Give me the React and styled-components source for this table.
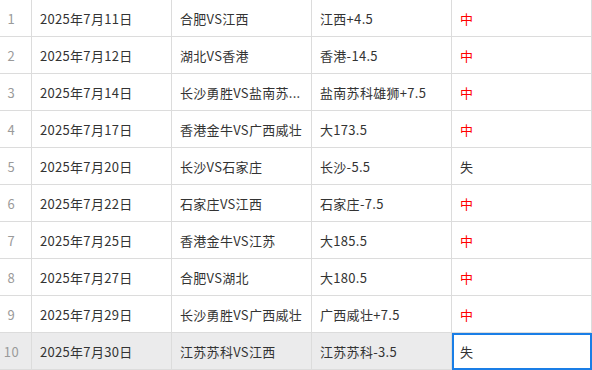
import styled, { createGlobalStyle } from "styled-components";

const GlobalStyle = createGlobalStyle`
  html, body {
    margin: 0;
    padding: 0;
    background: #ffffff;
  }
  body {
    font-family: "Microsoft YaHei", "Noto Sans CJK SC", "Noto Sans", sans-serif;
    overflow: hidden;
  }
`;

const Sheet = styled.div`
  width: 592px;
  height: 370px;
  overflow: hidden;
  background: #ffffff;
`;

const Row = styled.div`
  display: grid;
  grid-template-columns: 32px repeat(4, 140px);
  background: ${(p) => (p.$active ? "#ebebec" : "#ffffff")};
`;

const Cell = styled.div`
  height: 36px;
  padding: 0 8px;
  display: flex;
  align-items: center;
  border-right: 1px solid #dcdcdc;
  border-bottom: 1px solid #dcdcdc;
  font-size: 13px;
  letter-spacing: 0.3px;
  color: ${(p) => (p.$hit ? "#ff0000" : "#333333")};
  white-space: nowrap;
  overflow: hidden;
  min-width: 0;
  box-sizing: content-box;

  span {
    overflow: hidden;
    text-overflow: ellipsis;
  }
`;

const IndexCell = styled(Cell)`
  width: 23px;
  padding: 0 8px 0 0;
  justify-content: center;
  color: #9a9a9a;
  letter-spacing: 0.6px;
`;

const DataCell = styled(Cell)`
  width: 123px;
`;

const SelectedCell = styled(DataCell)`
  background: #ffffff;
  outline: 2px solid #1a7ee6;
  outline-offset: -2px;
  position: relative;
  z-index: 1;
`;

const rows = [
  ["2025年7月11日", "合肥VS江西", "江西+4.5", "中"],
  ["2025年7月12日", "湖北VS香港", "香港-14.5", "中"],
  ["2025年7月14日", "长沙勇胜VS盐南苏...", "盐南苏科雄狮+7.5", "中"],
  ["2025年7月17日", "香港金牛VS广西威壮", "大173.5", "中"],
  ["2025年7月20日", "长沙VS石家庄", "长沙-5.5", "失"],
  ["2025年7月22日", "石家庄VS江西", "石家庄-7.5", "中"],
  ["2025年7月25日", "香港金牛VS江苏", "大185.5", "中"],
  ["2025年7月27日", "合肥VS湖北", "大180.5", "中"],
  ["2025年7月29日", "长沙勇胜VS广西威壮", "广西威壮+7.5", "中"],
  ["2025年7月30日", "江苏苏科VS江西", "江苏苏科-3.5", "失"],
];

export default function App() {
  return (
    <>
      <GlobalStyle />
      <Sheet>
        {rows.map(([date, match, pick, result], i) => {
          const active = i === rows.length - 1;
          const ResultCell = active ? SelectedCell : DataCell;
          return (
            <Row key={i} $active={active}>
              <IndexCell>{i + 1}</IndexCell>
              <DataCell><span>{date}</span></DataCell>
              <DataCell><span>{match}</span></DataCell>
              <DataCell><span>{pick}</span></DataCell>
              <ResultCell $hit={result === "中"}><span>{result}</span></ResultCell>
            </Row>
          );
        })}
      </Sheet>
    </>
  );
}
